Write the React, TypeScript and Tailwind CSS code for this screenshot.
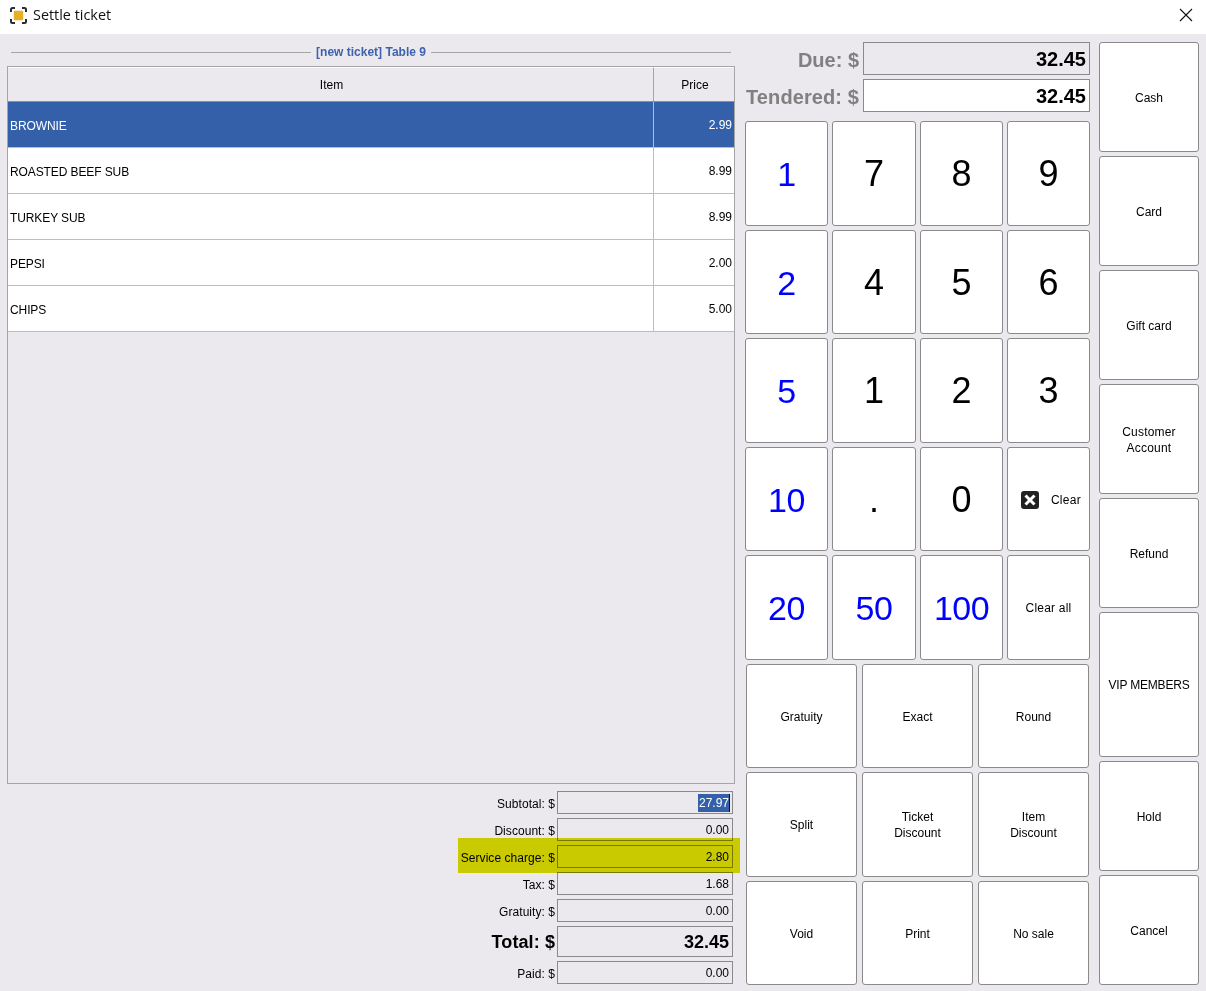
import React from "react";

const rows = [
  ["BROWNIE", "2.99"],
  ["ROASTED BEEF SUB", "8.99"],
  ["TURKEY SUB", "8.99"],
  ["PEPSI", "2.00"],
  ["CHIPS", "5.00"],
];

const boxClass = "flex items-center justify-center rounded-[3px] border border-[#8a8a8a] bg-white text-center ";

function Btn({ children, className = "" }: { children?: React.ReactNode; className?: string }) {
  return <div className={boxClass + "text-[12px] leading-[16px] text-black " + className}>{children}</div>;
}

function Num({ children, blue, even }: { children: React.ReactNode; blue?: boolean; even?: boolean }) {
  return (
    <div className={boxClass + (blue ? "text-[34px] tracking-[-0.5px] text-[#0000ff] " : "text-[36px] text-black ") + (even ? "pt-[2px]" : "pt-[1px]")}>
      {children}
    </div>
  );
}

function Sum({ label, value, big, selected }: { label: string; value: string; big?: boolean; selected?: boolean }) {
  return (
    <div className={"flex items-center justify-end " + (big ? "h-[31px]" : "h-[23px]")}>
      <span className={big ? "mr-[2px] pt-[2px] text-[18px] font-bold tracking-[0.1px] text-black" : "mr-[2px] pt-[2px] text-[12px] tracking-[0.05px] text-black"}>{label}</span>
      <div className={"flex h-full w-[176px] items-center justify-end border border-[#8a8a8a] pr-[3px] " + (big ? "pt-[1px] text-[18px] font-bold text-black" : "text-[12px] text-black")}>
        {selected ? <span className="mr-[-1px] border-r border-[#111] bg-[#3360a9] pl-[1px] text-white">{value}</span> : value}
      </div>
    </div>
  );
}

export default function App() {
  return (
    <div className="relative flex h-[991px] w-[1206px] flex-col overflow-hidden bg-[#ebe9ed] font-['Liberation_Sans',sans-serif]">
      <div className="flex h-[34px] items-center bg-white pb-[4px] pl-[10px] pr-[13px]">
        <svg width="17" height="17" viewBox="0 0 17 17" fill="none" className="mr-[6px]">
          <path d="M1 5V2.5C1 1.7 1.7 1 2.5 1H5M12 1h2.5C15.3 1 16 1.7 16 2.5V5M16 12v2.5c0 .8-.7 1.5-1.5 1.5H12M5 16H2.5C1.7 16 1 15.3 1 14.5V12" stroke="#2b2b33" strokeWidth="2" />
          <rect x="3.8" y="3.8" width="9.4" height="9.4" rx="1" fill="#e6b022" />
        </svg>
        <span className="font-['Open_Sans',sans-serif] text-[14.4px] text-[#111]">Settle ticket</span>
        <svg width="14" height="14" viewBox="0 0 14 14" className="ml-auto" fill="none">
          <path d="M1 1l12 12M13 1L1 13" stroke="#111" strokeWidth="1.1" />
        </svg>
      </div>

      <div className="flex flex-1">
        <div className="ml-[7px] flex w-[728px] flex-col pt-[10px]">
          <div className="flex h-[16px] items-center px-[4px]">
            <div className="h-px flex-1 bg-[#a5a5a5]" />
            <span className="px-[5px] text-[12px] font-bold text-[#3f62ae]">[new ticket] Table 9</span>
            <div className="h-px flex-1 bg-[#a5a5a5]" />
          </div>
          <div className="mt-[6px] flex h-[718px] flex-col border border-[#a5a5a5]">
            <div className="flex h-[35px] border-b border-[#8f8f8f] text-[12px] text-black">
              <div className="flex w-[645px] items-center justify-center border-t border-white pl-[2px]">Item</div>
              <div className="flex flex-1 items-center justify-center border-l border-t border-white border-l-[#a5a5a5] pl-[2px]">Price</div>
            </div>
            {rows.map(([n, p], i) => (
              <div key={n} className={"flex h-[46px] border-b border-[#bdbdbd] text-[12px] " + (i === 0 ? "bg-[#3360a9] text-white" : "bg-white text-black")}>
                <div className="flex w-[645px] items-center pl-[2px] pt-[2px] tracking-[-0.1px]">{n}</div>
                <div className="flex flex-1 items-center justify-end border-l border-[#bdbdbd] pr-[2px]">{p}</div>
              </div>
            ))}
          </div>
          <div className="mr-[2px] mt-[7px] flex flex-col gap-[4px]">
            <Sum label="Subtotal: $" value="27.97" selected />
            <Sum label="Discount: $" value="0.00" />
            <Sum label="Service charge: $" value="2.80" />
            <Sum label="Tax: $" value="1.68" />
            <Sum label="Gratuity: $" value="0.00" />
            <Sum label="Total: $" value="32.45" big />
            <Sum label="Paid: $" value="0.00" />
          </div>
        </div>

        <div className="ml-[10px] flex w-[345px] flex-col pt-[8px]">
          <div className="flex h-[33px] items-center justify-end">
            <span className="mr-[4px] pt-[2px] text-[20px] font-bold text-[#808080]">Due: $</span>
            <div className="flex h-full w-[227px] items-center justify-end border border-[#8a8a8a] pr-[3px] text-[20px] font-bold text-black">32.45</div>
          </div>
          <div className="mt-[4px] flex h-[33px] items-center justify-end">
            <span className="mr-[4px] pt-[2px] text-[20px] font-bold tracking-[0.1px] text-[#808080]">Tendered: $</span>
            <div className="flex h-full w-[227px] items-center justify-end border border-[#8a8a8a] bg-white pr-[3px] text-[20px] font-bold text-black">32.45</div>
          </div>
          <div className="mt-[9px] grid grid-cols-[83px_84px_83px_83px] grid-rows-[105px_104px_105px_104px_105px] gap-[4px]">
            <Num blue>1</Num>
            <Num>7</Num>
            <Num>8</Num>
            <Num>9</Num>
            <Num blue even>2</Num>
            <Num even>4</Num>
            <Num even>5</Num>
            <Num even>6</Num>
            <Num blue>5</Num>
            <Num>1</Num>
            <Num>2</Num>
            <Num>3</Num>
            <Num blue even>10</Num>
            <Num even>.</Num>
            <Num even>0</Num>
            <Btn className="pl-[5px] pt-[2px]">
              <svg width="18" height="18" viewBox="0 0 18 18" className="mr-[12px]">
                <rect width="18" height="18" rx="3" fill="#222" />
                <path d="M4.5 4.5l9 9M13.5 4.5l-9 9" stroke="#fff" strokeWidth="3" />
              </svg>
              <span className="tracking-[0.3px]">Clear</span>
            </Btn>
            <Num blue>20</Num>
            <Num blue>50</Num>
            <Num blue>100</Num>
            <Btn className="tracking-[0.2px]">Clear all</Btn>
          </div>
          <div className="ml-[1px] mt-[4px] grid w-[343px] grid-cols-[111px_111px_111px] grid-rows-[104px_105px_104px] gap-x-[5px] gap-y-[4px]">
            <Btn className="pt-[2px]">Gratuity</Btn>
            <Btn className="pt-[2px]">Exact</Btn>
            <Btn className="pt-[2px]">Round</Btn>
            <Btn>Split</Btn>
            <Btn>Ticket<br />Discount</Btn>
            <Btn>Item<br />Discount</Btn>
            <Btn className="pt-[2px]">Void</Btn>
            <Btn className="pt-[2px]">Print</Btn>
            <Btn className="pt-[2px]">No sale</Btn>
          </div>
        </div>

        <div className="ml-[9px] grid h-fit w-[100px] grid-rows-[110px_110px_110px_110px_110px_145px_110px_110px] gap-[4px] pt-[8px]">
          <Btn className="pt-[2px]">Cash</Btn>
          <Btn className="pt-[2px]">Card</Btn>
          <Btn className="pt-[2px]">Gift card</Btn>
          <Btn className="pt-[2px] tracking-[0.2px]">Customer<br />Account</Btn>
          <Btn className="pt-[2px]">Refund</Btn>
          <Btn className="tracking-[-0.2px]">VIP MEMBERS</Btn>
          <Btn className="pt-[2px]">Hold</Btn>
          <Btn className="pt-[2px]">Cancel</Btn>
        </div>
      </div>

      <div className="absolute left-[458px] top-[838px] h-[35px] w-[282px] bg-[#dcdd00] mix-blend-multiply" />
    </div>
  );
}
